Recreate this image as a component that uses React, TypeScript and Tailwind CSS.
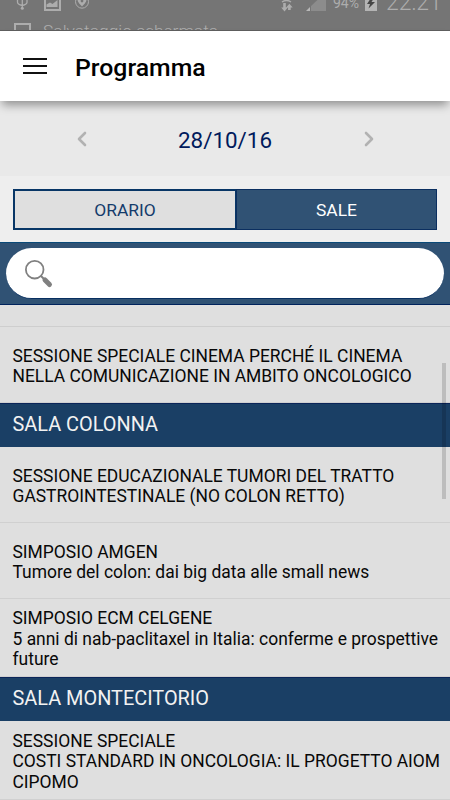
import { ChevronLeft, ChevronRight } from "lucide-react";

interface Session {
  lines: string[];
  height: string;
}

interface Room {
  name?: string;
  sessions: Session[];
}

const rooms: Room[] = [
  {
    sessions: [
      {
        lines: ["SESSIONE SPECIALE CINEMA PERCHÉ IL CINEMA", "NELLA COMUNICAZIONE IN AMBITO ONCOLOGICO"],
        height: "h-[76px]",
      },
    ],
  },
  {
    name: "SALA COLONNA",
    sessions: [
      {
        lines: ["SESSIONE EDUCAZIONALE TUMORI DEL TRATTO", "GASTROINTESTINALE (NO COLON RETTO)"],
        height: "h-[76px]",
      },
      {
        lines: ["SIMPOSIO AMGEN", "Tumore del colon: dai big data alle small news"],
        height: "h-[76px]",
      },
      {
        lines: ["SIMPOSIO ECM CELGENE", "5 anni di nab-paclitaxel in Italia: conferme e prospettive", "future"],
        height: "h-[78px]",
      },
    ],
  },
  {
    name: "SALA MONTECITORIO",
    sessions: [
      {
        lines: ["SESSIONE SPECIALE", "COSTI STANDARD IN ONCOLOGIA: IL PROGETTO AIOM", "CIPOMO"],
        height: "h-[79px]",
      },
    ],
  },
];

function StatusBar() {
  return (
    <div className="relative h-[31px] shrink-0 overflow-hidden border-b border-[#5f5f5f] bg-[#757575] text-[#adadad]">
      <svg className="absolute inset-0" width="450" height="30" fill="none" stroke="#adadad">
        {/* usb */}
        <path d="M22.3 0v8M17.5 0v2.2q0 2 4.8 3.3M27 0v2.2q0 2-4.7 3.3" strokeWidth="1.3" />
        <circle cx="22.3" cy="8.2" r="1.5" fill="#adadad" stroke="none" />
        {/* picture */}
        <path d="M45 -5h15v15h-15z" strokeWidth="2" />
        <path d="M46.5 7V4.500l3.500-2 2.500 1.500 5-4V7z" fill="#adadad" stroke="none" />
        {/* location */}
        <circle cx="82" cy="1.700" r="6.500" strokeWidth="1" />
        <path d="M82 6.500C78 2.500 77.500 1 77.500-1h9c0 2-.5 3.500-4.500 7.500z" fill="#adadad" stroke="none" />
        <circle cx="82" cy="1" r="1.400" fill="#757575" stroke="none" />
        {/* screenshot notification */}
        <path d="M15 35V24h15v11" strokeWidth="2" />
        {/* data transfer */}
        <path d="M282 2q4.500-3 9 0" strokeWidth="1.400" />
        <path d="M283.200 3h2.600v4.500h2l-3.300 4-3.300-4h2zM288 10h2.700V7.500h2l-3.300-3.700-3.300 3.700h2z" fill="#adadad" stroke="none" />
        {/* signal */}
        <path d="M311 6L326-8v19h-15z" fill="#8c8c8c" stroke="none" />
        <path d="M306 11l4-4v4z" fill="#b8b8b8" stroke="none" />
        {/* battery */}
        <path d="M365-4h12v15h-12z" fill="#b4b4b4" stroke="none" />
        <path d="M371-2l-4 6h3l-1.500 4.500L375 2h-3.500L374-2z" fill="#454545" stroke="none" />
      </svg>
      <span className="absolute left-[333px] top-[-5px] text-[14px] leading-4">94%</span>
      <span className="absolute left-[386px] top-[-10px] text-[23px] font-light leading-[26px]">22:21</span>
      <span className="absolute left-[43px] top-[21px] whitespace-nowrap text-[17.4px] font-light leading-5">
        Salvataggio schermata
      </span>
    </div>
  );
}

function SessionRow({ session }: { session: Session }) {
  return (
    <div
      className={`${session.height} flex shrink-0 flex-col justify-center border-b border-[#d0d0d0] pl-[12.5px] pt-[3px] text-[17.45px] leading-[20.5px] text-[#080808]`}
    >
      {session.lines.map((line) => (
        <p key={line} className="whitespace-nowrap">
          {line}
        </p>
      ))}
    </div>
  );
}

export default function App() {
  return (
    <div className="relative flex h-[800px] w-[450px] flex-col overflow-hidden bg-[#dfdfdf] font-[Roboto,sans-serif]">
      <StatusBar />

      <header className="relative z-10 flex h-[70px] shrink-0 items-center bg-white shadow-[0_6px_9px_-2px_rgba(0,0,0,0.38)]">
        <button aria-label="Menu" className="ml-[23px] flex w-6 flex-col gap-[5px]">
          <span className="h-0.5 bg-[#111]" />
          <span className="h-0.5 bg-[#111]" />
          <span className="h-0.5 bg-[#111]" />
        </button>
        <h1 className="ml-[28px] mt-[3px] text-[24.8px] font-medium leading-8 text-black">Programma</h1>
      </header>

      <div className="flex h-[75px] shrink-0 items-center justify-center bg-[#e9e9e9] pt-px">
        <ChevronLeft size={24} strokeWidth={2.6} className="text-[#b2b2b2]" />
        <span className="w-[263px] pt-[2px] text-center text-[22.4px] leading-7 text-[#001a5c]">28/10/16</span>
        <ChevronRight size={24} strokeWidth={2.6} className="text-[#b2b2b2]" />
      </div>

      <div className="h-[66px] shrink-0 bg-[#eeeeee] px-[13px] pt-[13px]">
        <div className="flex h-[41px] text-[17.4px]">
          <button className="w-[223px] border-2 border-r border-[#083666] bg-[#dfdfdf] pt-0.5 text-[#143b6b]">
            ORARIO
          </button>
          <button className="flex-1 border border-[#0b2f60] bg-[#305274] pt-0.5 text-white">SALE</button>
        </div>
      </div>

      <div className="h-[63px] shrink-0 border-y border-t-[#0a4a78] border-b-[#00235c] bg-[#305274] px-1.5 pt-[5px]">
        <div className="flex h-[51px] items-center rounded-full border-b border-[#082f60] bg-white pl-[19px] pt-px">
          <svg width="30" height="30" fill="none" stroke="#808080">
            <circle cx="9.700" cy="10.700" r="8.800" strokeWidth="1.800" />
            <path d="M16 17l3 3" strokeWidth="2" />
            <path d="M20 21l4.500 4.500" strokeWidth="5" strokeLinecap="round" />
          </svg>
        </div>
      </div>

      <main className="flex flex-1 flex-col overflow-hidden">
        <div className="h-[22px] shrink-0 border-b border-[#cecece]" />
        {rooms.map((room, i) => (
          <section key={i} className="shrink-0">
            {room.name && (
              <h2 className="h-11 border-t border-[#0b2559] bg-[#1a3f65] pl-[12.5px] text-[19.9px] leading-[41px] text-[#f2f2f2]">
                {room.name}
              </h2>
            )}
            {room.sessions.map((session) => (
              <SessionRow key={session.lines[0]} session={session} />
            ))}
          </section>
        ))}
      </main>

      {/* Scroll indicator */}
      <div className="absolute left-[442px] top-[363px] h-[136px] w-1 bg-black/15" />
    </div>
  );
}
